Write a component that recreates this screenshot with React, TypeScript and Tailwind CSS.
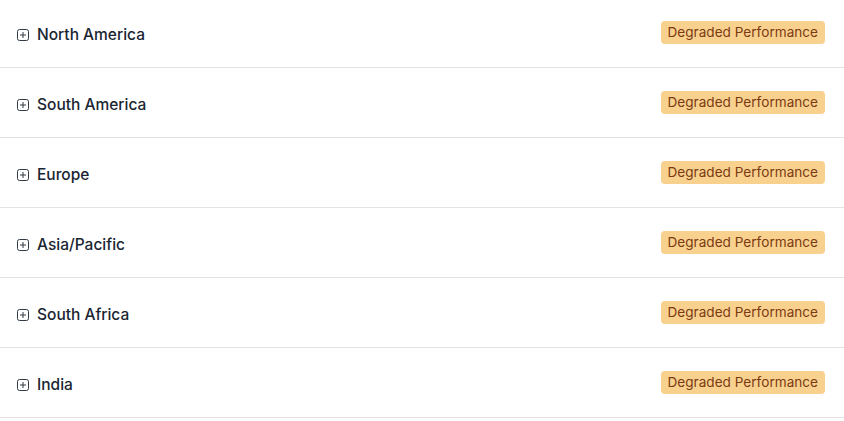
import React from 'react'

const regions = ['North America', 'South America', 'Europe', 'Asia/Pacific', 'South Africa', 'India']

const PlusBox = () => (
  <svg width="12" height="12" viewBox="0 0 12 12" fill="none" className="shrink-0">
    <rect x="0.5" y="0.5" width="11" height="11" rx="2" stroke="#2f3a45" strokeWidth="1" />
    <path d="M3 6h6M6 3v6" stroke="#2f3a45" strokeWidth="1" />
  </svg>
)

export default function App() {
  return (
    <div className="-mt-[2px] w-[844px] bg-white font-['Inter',sans-serif]">
      {regions.map((name) => (
        <div
          key={name}
          className="flex h-[70px] items-center justify-between border-b border-[#e3e3e3] pt-[5px] pl-[17px] pr-[19px]"
        >
          <div className="flex items-center gap-[8px]">
            <PlusBox />
            <span className="text-[15.5px] font-medium text-[#1a2532]">{name}</span>
          </div>
          <span className="mb-[5px] rounded-[4px] bg-[#f9d18f] px-[7px] py-[2px] text-[13.6px] leading-[19px] text-[#7b3a12]">
            Degraded Performance
          </span>
        </div>
      ))}
    </div>
  )
}
